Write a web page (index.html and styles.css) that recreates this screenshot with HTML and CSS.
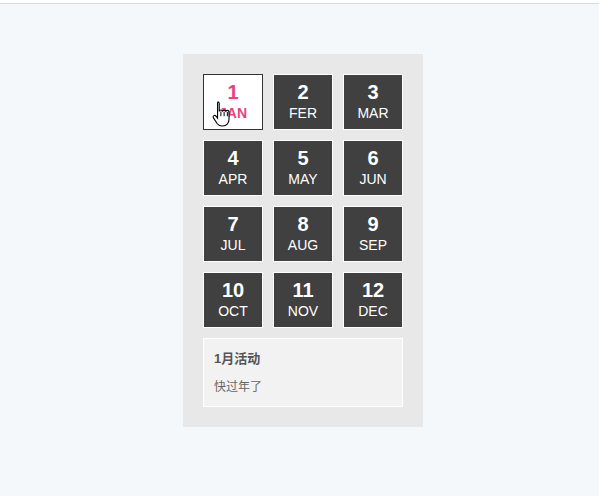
FILE: index.html
```html
<!DOCTYPE html>
<html>
<head>
<meta charset="utf-8">
<link rel="stylesheet" href="styles.css">
</head>
<body>
<div class="page">
  <div class="panel">
    <div class="grid">
      <div class="tile active"><span class="num">1</span><span class="mon">JAN</span>
        <svg class="cursor" width="20" height="27" viewBox="0 0 18 24"><path d="M5 1.5c.9 0 1.5.6 1.5 1.5v7.2c.2-.9.8-1.3 1.5-1.3s1.3.5 1.4 1.3c.2-.8.8-1.2 1.5-1.2s1.3.5 1.4 1.3c.2-.7.8-1.1 1.5-1.1.9 0 1.5.6 1.5 1.5v6.5c0 3.6-2.4 6.1-5.6 6.1H9c-2 0-3.3-.8-4.4-2.300L1.3 15.9c-.5-.8-.3-1.6.4-2 .6-.4 1.4-.2 1.9.4l1.4 1.8V3c0-.9.1-1.5 0-1.5z" fill="#fff" stroke="#000" stroke-width="1"/><path d="M8 10.2v4.3M10.9 10.4v4.1M13.8 10.6v3.9" stroke="#000" stroke-width="0.9" fill="none"/></svg>
      </div>
      <div class="tile"><span class="num">2</span><span class="mon">FER</span></div>
      <div class="tile"><span class="num">3</span><span class="mon">MAR</span></div>
      <div class="tile"><span class="num">4</span><span class="mon">APR</span></div>
      <div class="tile"><span class="num">5</span><span class="mon">MAY</span></div>
      <div class="tile"><span class="num">6</span><span class="mon">JUN</span></div>
      <div class="tile"><span class="num">7</span><span class="mon">JUL</span></div>
      <div class="tile"><span class="num">8</span><span class="mon">AUG</span></div>
      <div class="tile"><span class="num">9</span><span class="mon">SEP</span></div>
      <div class="tile"><span class="num">10</span><span class="mon">OCT</span></div>
      <div class="tile"><span class="num">11</span><span class="mon">NOV</span></div>
      <div class="tile"><span class="num">12</span><span class="mon">DEC</span></div>
    </div>
    <div class="info">
      <h4 class="info-title">1月活动</h4>
      <p class="info-text">快过年了</p>
    </div>
  </div>
</div>
</body>
</html>
```
FILE: styles.css
```css
html, body {
  margin: 0;
  padding: 0;
  background: #fff;
}
body {
  padding-top: 3px;
  font-family: "Liberation Sans", Arial, "Noto Sans CJK SC", sans-serif;
}
.page {
  border-top: 1px solid #dcdcdc;
  background: #f5f8fb;
  height: 493px;
  display: flex;
  justify-content: center;
  padding-top: 50px;
  box-sizing: border-box;
}
.panel {
  width: 240px;
  height: 373px;
  background: #e8e8e8;
  padding: 20px;
  box-sizing: border-box;
  margin-left: 7px;
}
.grid {
  display: grid;
  grid-template-columns: repeat(3, 60px);
  grid-auto-rows: 56px;
  gap: 10px;
}
.tile {
  position: relative;
  background: #404040;
  border: 1px solid #fff;
  color: #fff;
  display: flex;
  flex-direction: column;
  align-items: center;
  box-sizing: border-box;
  padding-top: 6px;
}
.tile.active {
  background: #fff;
  border-color: #333;
  color: #e8437b;
}
.num {
  font-size: 20px;
  font-weight: bold;
  line-height: 22px;
}
.mon {
  font-size: 14px;
  line-height: 20px;
}
.tile.active .mon {
  font-weight: bold;
}
.cursor {
  position: absolute;
  left: 8px;
  top: 25px;
}
.info {
  margin-top: 10px;
  height: 69px;
  background: #f2f2f2;
  border: 1px solid #fff;
  box-sizing: border-box;
  padding: 12px 10px;
}
.info-title {
  margin: 0;
  font-size: 13px;
  font-weight: bold;
  color: #555;
  line-height: 16px;
}
.info-text {
  margin: 12px 0 0;
  font-size: 12px;
  color: #666;
  line-height: 16px;
}
```
